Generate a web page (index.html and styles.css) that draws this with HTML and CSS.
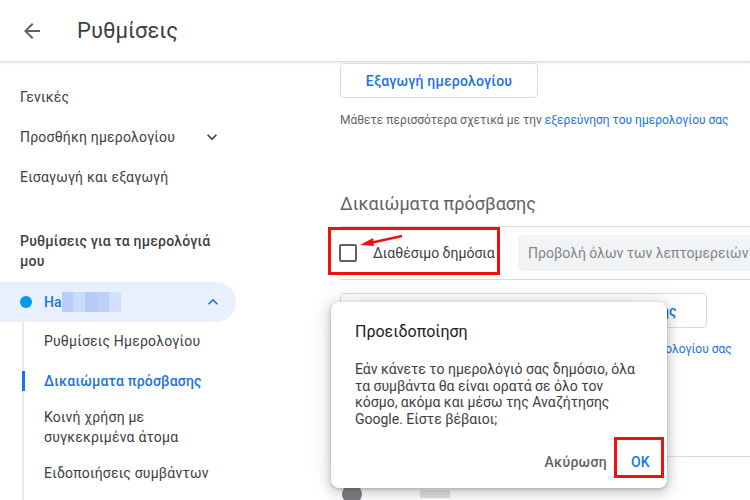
FILE: index.html
```html
<!DOCTYPE html>
<html>

<head>
  <title>Ρυθμίσεις</title>
  <link rel="stylesheet" href="styles.css">
</head>

<body>
  <div class="topbar">
    <svg class="back" width="24" height="24" viewBox="0 0 24 24">
      <path d="M20 11H7.83l5.59-5.59L12 4l-8 8 8 8 1.41-1.41L7.83 13H20v-2z" fill="#5f6368" />
    </svg>
    <h1>Ρυθμίσεις</h1>
  </div>

  <div class="page">
    <div class="sidebar">
      <div class="nav-item">Γενικές</div>
      <div class="nav-item">Προσθήκη ημερολογίου
        <svg class="chev" width="24" height="24" viewBox="0 0 24 24">
          <path d="M7.41 8.59L12 13.17l4.59-4.58L18 10l-6 6-6-6z" fill="#3c4043" />
        </svg>
      </div>
      <div class="nav-item">Εισαγωγή και εξαγωγή</div>

      <div class="nav-section">Ρυθμίσεις για τα ημερολόγιά μου</div>

      <div class="cal-pill">
        <span class="dot"></span>
        <span class="cal-name">Ha<span class="blur"><i class="b1"></i><i class="b2"></i><i class="b3"></i><i class="b4"></i><i class="b5"></i></span></span>
        <svg class="chev" width="24" height="24" viewBox="0 0 24 24">
          <path d="M7.41 15.41L12 10.83l4.59 4.58L18 14l-6-6-6 6z" fill="#1a73e8" />
        </svg>
      </div>

      <div class="sub-list">
        <div class="sub-item">Ρυθμίσεις Ημερολογίου</div>
        <div class="sub-item active">Δικαιώματα πρόσβασης</div>
        <div class="sub-item">Κοινή χρήση με<br>συγκεκριμένα άτομα</div>
        <div class="sub-item">Ειδοποιήσεις συμβάντων</div>
      </div>
    </div>

    <div class="main">
      <button class="outline-btn export-btn">Εξαγωγή ημερολογίου</button>
      <p class="help">Μάθετε περισσότερα σχετικά με την <a href="#">εξερεύνηση του ημερολογίου σας</a></p>

      <h2>Δικαιώματα πρόσβασης</h2>
      <div class="divider"></div>
      <div class="access-row">
        <label class="public-toggle">
          <span class="checkbox"></span>
          Διαθέσιμο δημόσια
        </label>
        <div class="select">Προβολή όλων των λεπτομερειών</div>
      </div>
      <div class="divider divider-tight"></div>

      <button class="outline-btn link-btn">Λήψη συνδέσμου με δυνατότητα κοινοποίησης</button>
      <p class="help help-2">Μάθετε περισσότερα σχετικά με την <a href="#">κοινοποίηση του ημερολογίου σας</a></p>

      <div class="divider divider-low"></div>
      <div class="person-row">
        <span class="avatar"></span>
        <span class="person-bar"></span>
      </div>
    </div>
  </div>

  <!-- annotations -->
  <div class="mark mark-public"></div>
  <svg class="arrow" width="50" height="16" viewBox="0 0 50 16">
    <path d="M44 2 L12 9" stroke="#ee1111" stroke-width="2.5" fill="none" />
    <path d="M2 11 L15 4 L16 12 Z" fill="#ee1111" />
  </svg>

  <div class="dialog">
    <div class="dialog-title">Προειδοποίηση</div>
    <div class="dialog-body">Εάν κάνετε το ημερολόγιό σας δημόσιο, όλα τα συμβάντα θα είναι ορατά σε όλο τον κόσμο, ακόμα και μέσω της Αναζήτησης Google. Είστε βέβαιοι;</div>
    <div class="dialog-actions">
      <button class="text-btn cancel">Ακύρωση</button>
      <button class="text-btn ok">OK</button>
    </div>
  </div>
  <div class="mark mark-ok"></div>
</body>

</html>
```

FILE: styles.css
```css
body {
  margin: 0;
  font-family: Roboto, Arial, sans-serif;
  color: #3c4043;
  background-color: #fff;
  overflow: hidden;
  height: 500px;
}

.topbar {
  display: flex;
  align-items: center;
  height: 61px;
  border-bottom: 1px solid #dadce0;
  box-shadow: 0 1px 2px rgba(60, 64, 67, 0.12);
}

.back {
  margin-left: 20px;
}

.topbar h1 {
  margin: 0 0 0 33px;
  font-size: 22px;
  font-weight: 400;
  color: #3c4043;
}

.page {
  display: flex;
}

.sidebar {
  width: 252px;
  flex-shrink: 0;
  padding-top: 15px;
  font-size: 14px;
  line-height: 20px;
}

.nav-item {
  display: flex;
  align-items: center;
  height: 40px;
  padding-left: 20px;
  letter-spacing: 0.2px;
}

.nav-item .chev {
  margin-left: auto;
  margin-right: 30px;
  width: 20px;
  height: 20px;
}

.nav-section {
  margin-top: 34px;
  padding-left: 20px;
  padding-right: 30px;
  font-weight: 500;
  color: #3c4043;
  letter-spacing: 0.2px;
}

.cal-pill {
  display: flex;
  align-items: center;
  width: 236px;
  height: 40px;
  margin-top: 11px;
  background-color: #e8f0fe;
  border-radius: 0 20px 20px 0;
  color: #1a73e8;
  font-weight: 500;
}

.dot {
  width: 12px;
  height: 12px;
  margin-left: 20px;
  border-radius: 50%;
  background-color: #039be5;
}

.cal-name {
  display: flex;
  align-items: center;
  margin-left: 12px;
}

.blur {
  display: flex;
  height: 20px;
  margin-left: 1px;
}

.blur i {
  display: block;
  height: 20px;
}

.blur .b1 { width: 11px; background-color: #b9cff7; }
.blur .b2 { width: 12px; background-color: #cbdcf8; }
.blur .b3 { width: 12px; background-color: #b4cbf6; }
.blur .b4 { width: 12px; background-color: #bed2f7; }
.blur .b5 { width: 12px; background-color: #d2e1fb; }

.cal-pill .chev {
  margin-left: auto;
  margin-right: 13px;
  width: 20px;
  height: 20px;
}

.sub-list {
  margin-left: 22px;
  border-left: 2px solid #e8eaed;
  height: 200px;
}

.sub-item {
  position: relative;
  display: flex;
  align-items: center;
  min-height: 40px;
  padding: 6px 0 6px 20px;
  box-sizing: border-box;
  letter-spacing: 0.2px;
}

.sub-item:first-child {
  margin-top: -1px;
}

.sub-item.active {
  color: #1a73e8;
  font-weight: 500;
}

.sub-item.active::before {
  content: "";
  position: absolute;
  left: -2px;
  top: 10px;
  width: 3px;
  height: 20px;
  background-color: #1a73e8;
}

.main {
  flex: 1;
  padding-left: 88px;
  padding-top: 1px;
}

.outline-btn {
  display: block;
  height: 35px;
  padding: 0;
  border: 1px solid #dadce0;
  border-radius: 4px;
  background-color: #fff;
  color: #1a73e8;
  font-family: Roboto, Arial, sans-serif;
  font-size: 14px;
  font-weight: 500;
  letter-spacing: 0.2px;
  white-space: nowrap;
}

.export-btn {
  width: 198px;
}

.link-btn {
  width: 367px;
  margin-top: 13px;
}

.help {
  margin: 14px 0 0;
  font-size: 12px;
  line-height: 16px;
  color: #5f6368;
  white-space: nowrap;
}

.help a {
  color: #1a73e8;
  text-decoration: none;
}

.help-2 {
  margin-top: 13px;
}

.main h2 {
  margin: 64px 0 0;
  font-size: 18px;
  line-height: 24px;
  font-weight: 400;
  color: #5f6368;
}

.divider {
  height: 1px;
  margin-top: 10px;
  background-color: #dadce0;
}

.divider-tight {
  margin-top: 0;
}

.divider-low {
  margin-top: 99px;
}

.access-row {
  display: flex;
  align-items: center;
  height: 52px;
}

.public-toggle {
  display: flex;
  align-items: center;
  width: 178px;
  flex-shrink: 0;
  font-size: 14px;
  color: #3c4043;
}

.checkbox {
  width: 14px;
  height: 14px;
  margin-left: -1px;
  margin-right: 16px;
  border: 2px solid #5f6368;
  border-radius: 2px;
}

.select {
  flex: 1;
  height: 36px;
  line-height: 36px;
  padding-left: 10px;
  background-color: #f1f3f4;
  border-radius: 4px 0 0 4px;
  font-size: 14px;
  color: #80868b;
  white-space: nowrap;
  overflow: hidden;
}

.person-row {
  display: flex;
  align-items: center;
  margin-top: 27px;
}

.avatar {
  width: 20px;
  height: 20px;
  margin-left: 2px;
  border-radius: 50%;
  background-color: #7b7f84;
}

.person-bar {
  width: 30px;
  height: 8px;
  margin-left: 58px;
  background-color: #e0e0e0;
}

/* red annotation boxes */
.mark {
  position: absolute;
  border: 3px solid #ee1111;
}

.mark-public {
  left: 328px;
  top: 227px;
  width: 166px;
  height: 42px;
}

.arrow {
  position: absolute;
  left: 358px;
  top: 234px;
}

.mark-ok {
  left: 614px;
  top: 437px;
  width: 44px;
  height: 35px;
}

.dialog {
  position: absolute;
  left: 331px;
  top: 302px;
  width: 336px;
  height: 186px;
  box-sizing: border-box;
  padding: 18px 24px 0;
  background-color: #fff;
  border-radius: 8px;
  box-shadow: 0 4px 8px 3px rgba(60, 64, 67, 0.15), 0 1px 3px rgba(60, 64, 67, 0.3), 0 0 24px rgba(0, 0, 0, 0.12);
}

.dialog-title {
  font-size: 16px;
  line-height: 24px;
  color: #202124;
}

.dialog-body {
  margin-top: 17px;
  font-size: 14px;
  line-height: 16.5px;
  color: #3c4043;
}

.dialog-actions {
  display: flex;
  justify-content: flex-end;
  margin-top: 17px;
  margin-right: -15px;
}

.text-btn {
  height: 36px;
  padding: 0 8px;
  border: none;
  background: none;
  font-family: Roboto, Arial, sans-serif;
  font-size: 14px;
  font-weight: 500;
  letter-spacing: 0.3px;
}

.cancel {
  color: #5f6368;
  margin-right: 8px;
}

.ok {
  color: #1a73e8;
}
```
